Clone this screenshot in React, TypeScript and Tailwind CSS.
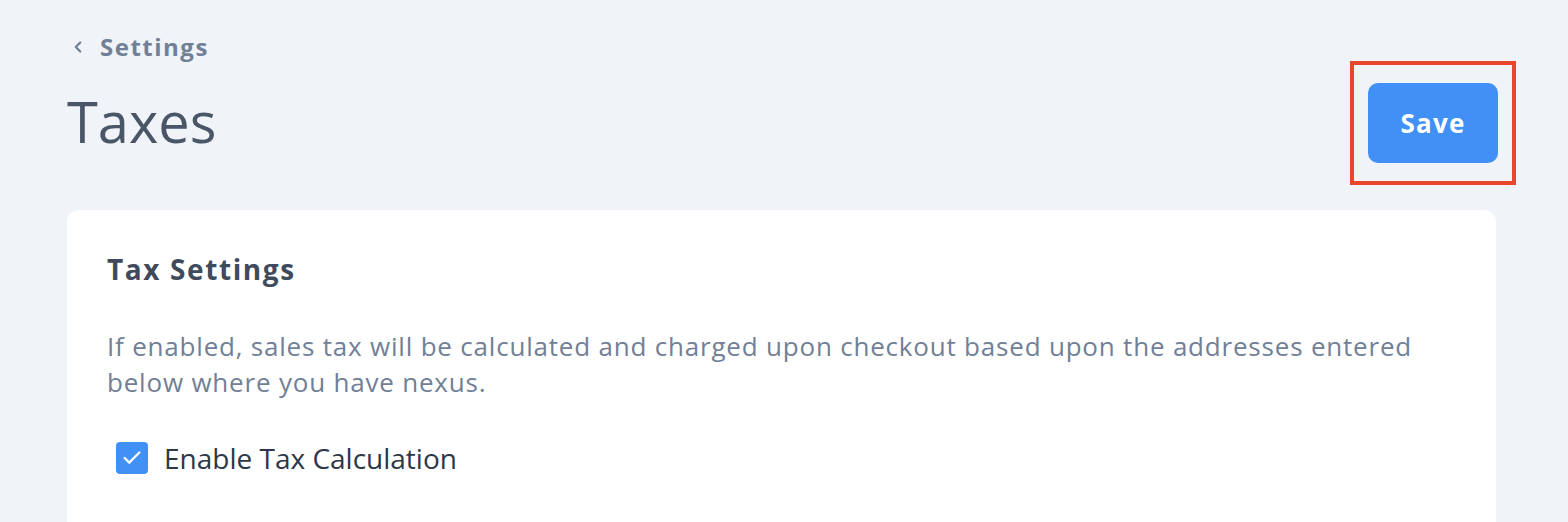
import { ChevronLeft, Check } from "lucide-react";

const font = { fontFamily: '"Open Sans", "Noto Sans", sans-serif' };

export default function App() {
  return (
    <div className="min-h-[522px] bg-[#f0f4f8] pl-[67px] pr-[72px] pt-[30px]" style={font}>
      <a className="flex items-center gap-[13px] text-[#718096]">
        <ChevronLeft className="h-[18px] w-[18px] ml-[2px]" strokeWidth={3} />
        <span className="text-[24px] font-bold leading-[34px] tracking-[1.5px]">Settings</span>
      </a>

      <div className="flex items-start justify-between">
        <h1 className="mt-[20px] text-[56px] leading-[74px] font-normal text-[#4a5568]">Taxes</h1>
        <div className="-mt-[3px] -mr-[20px] border-[4px] border-[#e8452c] px-[14px] py-[18px]">
          <button className="h-[80px] w-[130px] rounded-[10px] bg-[#4190f5] text-[26px] font-bold tracking-[1.2px] text-white">
            Save
          </button>
        </div>
      </div>

      <div className="mt-[25px] rounded-t-[12px] bg-white px-[40px] pt-[41px] pb-[60px]">
        <h2 className="text-[28px] font-bold leading-[36px] tracking-[1.6px] text-[#3f4b5d]">Tax Settings</h2>
        <p className="mt-[41px] text-[26px] leading-[36px] tracking-[0.8px] text-[#718096]">
          If enabled, sales tax will be calculated and charged upon checkout based upon the addresses entered
          <br />
          below where you have nexus.
        </p>
        <label className="mt-[40px] flex items-center gap-[16px] pl-[9px]">
          <span className="flex h-[32px] w-[32px] items-center justify-center rounded-[4px] bg-[#4190f5]">
            <Check className="h-[22px] w-[22px] text-white" strokeWidth={2.5} />
          </span>
          <span className="text-[28px] leading-[36px] text-[#2d3748]">Enable Tax Calculation</span>
        </label>
      </div>
    </div>
  );
}
